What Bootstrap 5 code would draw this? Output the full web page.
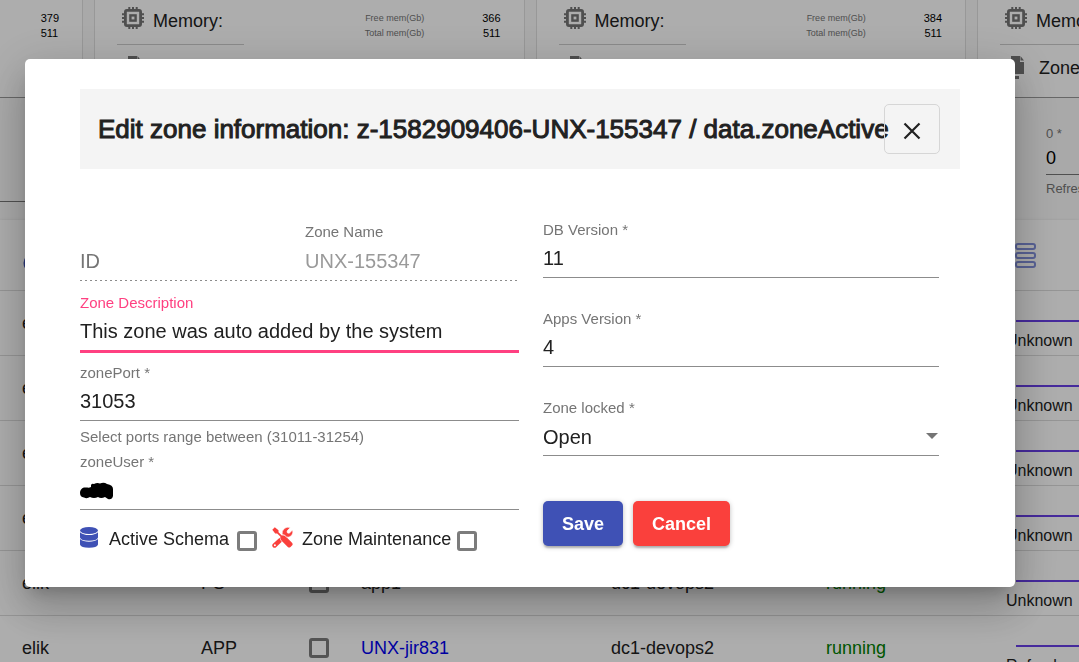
<!DOCTYPE html>
<html lang="en">
<head>
<meta charset="utf-8">
<meta name="viewport" content="width=device-width, initial-scale=1">
<title>Edit zone information</title>
<link rel="stylesheet" href="https://cdn.jsdelivr.net/npm/bootstrap@5.3.0/dist/css/bootstrap.min.css">
<style>
  body { font-family: "Liberation Sans", Arial, sans-serif; font-size: 18px; line-height: 24px; color: #212121; background: #fafafa; }

  /* Server cards */
  .servers { display: grid; grid-template-columns: 83px minmax(0, 1fr) minmax(0, 1fr) 102px; gap: 11px; height: 98px; border-bottom: 1px solid #999; }
  .server { background: #fff; border: solid #e0e0e0; border-width: 0 1px; white-space: nowrap; overflow: hidden; padding-left: 22px; }
  .server:first-child { border-left: 0; padding-left: 0; }
  .server:last-child { border-right: 0; }
  .server-row { height: 45px; padding-top: 6px; }
  .server-name { width: 127px; padding: 0 4px; border-bottom: 1px solid #ccc; gap: 8px; }
  .server-name span { padding-top: 3px; }
  .server-zones { padding: 11px 8px; gap: 13px; }
  .mem-info { font-size: 9px; line-height: 15px; color: #757575; padding: 5px 23px 0 0; gap: 58px; }
  .mem-info b { font-size: 11px; font-weight: 400; color: #000; }

  /* Filter bar */
  .filters { height: 122px; }
  .filters .filter-box { width: 300px; height: 104px; border: 0; border-bottom: 1px solid #777; background: transparent; }
  .refresh-box { width: 33px; padding-top: 28px; white-space: nowrap; overflow: hidden; font-size: 13px; line-height: 16px; color: #757575; }
  .refresh-box input { border: 0; border-bottom: 1px solid #777; background: transparent; width: 100%; height: 33px; padding: 0; font-size: 18px; display: block; margin-bottom: 6px; }

  /* Zone table */
  .zones { table-layout: fixed; width: 100%; background: #fff; box-shadow: 0 2px 4px rgba(0,0,0,.3); }
  .zones th { height: 70px; padding: 0; border-bottom: 1px solid #dcdcdc; }
  .zones td { height: 65px; padding: 0; border-bottom: 1px solid #dcdcdc; white-space: nowrap; }
  .zones th:first-child, .zones td:first-child { padding-left: 22px; }
  .zones a { color: #0000ee; text-decoration: none; }
  .zones .running { color: #008000; }
  .zones td:last-child { vertical-align: top; padding-top: 29px; font-size: 16px; line-height: 20px; overflow: hidden; }
  .refresh-bar { height: 2px; background: #673ee6; margin: 0 0 9px 10px; }
  .tick { appearance: none; display: block; flex: none; width: 20px; height: 20px; margin: 0; border: 3px solid #7c7c7c; border-radius: 3px; background: transparent; }

  /* Dialog */
  .modal-backdrop { --bs-backdrop-opacity: .32; }
  .zone-dialog { max-width: none; margin: 59px 64px 0 25px; }
  .zone-dialog .modal-content { border: 0; border-radius: 5px; padding: 30px 55px 36px; color: #212121; box-shadow: 0 11px 15px -7px rgba(0,0,0,.2), 0 24px 38px 3px rgba(0,0,0,.14), 0 9px 46px 8px rgba(0,0,0,.12); }
  .zone-dialog .modal-header { height: 80px; padding: 0 20px 0 18px; background: #f4f4f4; border: 0; border-radius: 0; }
  .zone-dialog .modal-title { min-width: 0; font-size: 26px; line-height: 32px; font-weight: 400; -webkit-text-stroke: 1px #212121; white-space: nowrap; }
  .close-btn { flex: none; width: 56px; height: 50px; padding: 4px 0 0; border: 1px solid #d6d6d6; border-radius: 5px; background: transparent; color: #212121; }
  .zone-form { display: grid; grid-template-columns: 439fr 396fr; column-gap: 24px; padding: 51px 21px 0 0; }
  .field { margin-bottom: 10px; position: relative; }
  .field label, .hint { display: block; font-size: 15px; line-height: 20px; height: 20px; color: #757575; }
  .field input, .field select { display: block; width: 100%; height: 38px; padding: 0; border: 0; border-bottom: 1px solid #8c8c8c; border-radius: 0; background: transparent; color: #212121; font-size: 20px; line-height: 24px; outline: 0; appearance: none; }
  .field input::placeholder { color: #757575; opacity: 1; }
  .field input:disabled { color: #9a9a9a; border-bottom: 0; }
  .field.active label { color: #ff4081; }
  .field.active input { height: 40px; border-bottom: 3px solid #ff4081; }
  .fixed-fields { gap: 11px; margin-bottom: 12px; padding-bottom: 1px; background: repeating-linear-gradient(90deg, #8c8c8c 0 2px, transparent 2px 5px) bottom / 100% 1px no-repeat; }
  .fixed-fields .field { margin: 0; }
  .field .arrow { position: absolute; right: 1px; bottom: 17px; pointer-events: none; }
  .field .redaction { position: absolute; left: 0; bottom: 8px; }
  .hint { margin: -4px 0 5px; }
  .left-col { padding-top: 2px; }
  .right-col .field { margin-bottom: 31px; }
  .actions { padding-top: 14px; gap: 10px; }
  .options { padding-top: 7px; }
  .options label { margin: 0 8px 0 11px; }
  .options .tick { margin: 4px 15px 0 0; }
  .options label.maint { margin: 0 6px 0 9px; }
  .action { height: 45px; padding: 0 19px; border: 0; border-radius: 5px; color: #fff; font-weight: 700; font-size: 18px; box-shadow: 0 3px 2px -1px rgba(0,0,0,.2), 0 1px 5px rgba(0,0,0,.25); }
  .save { background: #3f51b5; }
  .cancel { background: #fa403c; }
</style>
</head>
<body class="overflow-hidden">

<svg class="d-none">
  <symbol id="chip" viewBox="0 0 24 24">
    <g fill="none" stroke="#757575" stroke-width="2.800"><rect x="4.400" y="4.400" width="15.200" height="15.200" rx="1.500"/><rect x="9.400" y="9.400" width="5.200" height="5.200" stroke-width="2.400"/>
    <path d="M8.300 1v3M12 1v3M15.700 1v3M8.300 20v3M12 20v3M15.700 20v3M1 8.300h3M1 12h3M1 15.700h3M20 8.300h3M20 12h3M20 15.700h3" stroke-width="2"/></g>
  </symbol>
  <symbol id="files" viewBox="0 0 18 23">
    <path fill="#757575" d="M3 0h9v6h4v12H3zM12.500 0L16 4.500h-3.500zM0 4h3.500v16H11v3H0z"/>
  </symbol>
  <symbol id="stack" viewBox="0 0 30 26">
    <g fill="none" stroke="#8290dc" stroke-width="2"><rect x="10" y="2" width="19" height="5" rx="2"/><rect x="10" y="11" width="19" height="5" rx="2"/><rect x="10" y="20" width="19" height="5" rx="2"/></g>
  </symbol>
</svg>

<div class="vh-100 overflow-hidden">
  <section class="servers">
    <div class="server"><div class="server-row d-flex justify-content-end">
      <div class="mem-info d-flex"><b>379<br>511</b></div></div></div>
    <div class="server">
      <div class="server-row d-flex justify-content-between">
        <div class="server-name d-flex"><svg width="24" height="24"><use href="#chip"/></svg><span>Memory:</span></div>
        <div class="mem-info d-flex text-end"><span>Free mem(Gb)<br>Total mem(Gb)</span><b>366<br>511</b></div>
      </div>
      <div class="server-zones d-flex"><svg width="18" height="23"><use href="#files"/></svg>Zones:</div>
    </div>
    <div class="server">
      <div class="server-row d-flex justify-content-between">
        <div class="server-name d-flex"><svg width="24" height="24"><use href="#chip"/></svg><span>Memory:</span></div>
        <div class="mem-info d-flex text-end"><span>Free mem(Gb)<br>Total mem(Gb)</span><b>384<br>511</b></div>
      </div>
      <div class="server-zones d-flex"><svg width="18" height="23"><use href="#files"/></svg>Zones:</div>
    </div>
    <div class="server">
      <div class="server-row d-flex">
        <div class="server-name d-flex flex-shrink-0"><svg width="24" height="24"><use href="#chip"/></svg><span>Memory:</span></div>
      </div>
      <div class="server-zones d-flex"><svg class="flex-shrink-0" width="18" height="23"><use href="#files"/></svg>Zones:</div>
    </div>
  </section>

  <section class="filters d-flex justify-content-between">
    <input class="filter-box" type="text" aria-label="Filter">
    <div class="refresh-box"><label for="refresh" class="d-block">0 *</label><input id="refresh" value="0"><span>Refresh rate</span></div>
  </section>

  <table class="zones">
    <colgroup><col style="width:201px"><col style="width:108px"><col style="width:52px"><col style="width:250px"><col style="width:215px"><col style="width:180px"><col style="width:73px"></colgroup>
    <thead><tr><th><svg width="30" height="26" viewBox="0 0 30 26"><circle cx="11" cy="21" r="8" fill="none" stroke="#3f51b5" stroke-width="3"/></svg></th><th></th><th></th><th></th><th></th><th></th><th><svg width="30" height="26"><use href="#stack"/></svg></th></tr></thead>
    <tbody>
      <tr><td>elik</td><td></td><td></td><td></td><td></td><td></td><td><div class="refresh-bar"></div>Unknown</td></tr>
      <tr><td>elik</td><td></td><td></td><td></td><td></td><td></td><td><div class="refresh-bar"></div>Unknown</td></tr>
      <tr><td>elik</td><td></td><td></td><td></td><td></td><td></td><td><div class="refresh-bar"></div>Unknown</td></tr>
      <tr><td>elik</td><td></td><td></td><td></td><td></td><td></td><td><div class="refresh-bar"></div>Unknown</td></tr>
      <tr><td>elik</td><td>PS</td><td><input class="tick" type="checkbox" aria-label="Select app1"></td><td>app1</td><td>dc1-devops2</td><td class="running">running</td><td><div class="refresh-bar"></div>Unknown</td></tr>
      <tr><td>elik</td><td>APP</td><td><input class="tick" type="checkbox" aria-label="Select UNX-jir831"></td><td><a href="#">UNX-jir831</a></td><td>dc1-devops2</td><td class="running">running</td><td><div class="refresh-bar"></div>Refreshes</td></tr>
    </tbody>
  </table>
</div>

<div class="modal-backdrop show"></div>
<div class="modal d-block overflow-hidden" role="dialog" aria-modal="true" aria-labelledby="dialog-title">
  <div class="modal-dialog zone-dialog">
    <div class="modal-content">
      <div class="modal-header">
        <h1 class="modal-title" id="dialog-title">Edit zone information: z-1582909406-UNX-155347 / data.zoneActive</h1>
        <button type="button" class="close-btn d-flex align-items-center justify-content-center" aria-label="Close"><svg width="18" height="18" viewBox="0 0 18 18"><path d="M1.500 1.500l15 15M16.500 1.500l-15 15" stroke="currentColor" stroke-width="2.200"/></svg></button>
      </div>
      <form class="zone-form">
        <div class="left-col">
          <div class="fixed-fields d-flex">
            <div class="field w-50"><label for="zid"></label><input id="zid" placeholder="ID" aria-label="ID" disabled></div>
            <div class="field w-50"><label for="zname">Zone Name</label><input id="zname" value="UNX-155347" disabled></div>
          </div>
          <div class="field active"><label for="zdesc">Zone Description</label><input id="zdesc" value="This zone was auto added by the system"></div>
          <div class="field"><label for="zport">zonePort *</label><input id="zport" value="31053"></div>
          <div class="hint">Select ports range between (31011-31254)</div>
          <div class="field"><label for="zuser">zoneUser *</label><input id="zuser">
            <svg class="redaction" width="34" height="20" viewBox="0 0 34 20"><path d="M0 11C0 7 3 5 6 5.500C8 5.500 9 6 11 5L11 3Q12 1 14 2Q17 .5 20 1.500Q24 0 27 2Q33 3 33 7V14Q32 18 28 17L25 15Q21 17 18 15Q14 17 10 15Q7 17 4 15.500Q0 15 0 11z"/></svg></div>
          <div class="options d-flex">
            <svg width="18" height="21" viewBox="0 0 18 21" fill="#3f51b5"><ellipse cx="9" cy="3.500" rx="9" ry="3.500"/><path d="M0 5.200Q3 8 9 8T18 5.200V10.500Q17 13.700 9 13.700T0 10.500zM0 12Q3 14.800 9 14.800T18 12V17.500Q17 20.800 9 20.800T0 17.500z"/></svg>
            <label for="active">Active Schema</label><input class="tick" type="checkbox" id="active">
            <svg width="21" height="21" viewBox="0 0 21 21"><path fill="#fa403c" d="M2.800 .3L6.500 3.200V5.200L9.800 8.500Q12 7.800 13.800 9.600L20 15.800Q21.300 17.200 20 18.500L18.500 20Q17.200 21.200 15.800 20L9.600 13.800Q7.800 12 8.500 9.800L5.200 6.500H3.200L.3 2.800z"/><path fill="#fa403c" stroke="#fff" stroke-width=".6" d="M10.200 7.600Q9.600 3.800 12.400 1.500Q15-.6 18.300 .6L15 4L15.400 5.900L17.300 6.300L20.500 3Q21.600 6.200 19.500 8.500Q17 11 14.600 10Q12.500 7.500 10.200 7.600z"/><path fill="#fa403c" d="M7.600 10.800L1 16.800Q-.6 18.500 1 20.200Q2.800 21.600 4.300 20L9.800 14.700Q7.800 13 7.600 10.800z"/><circle cx="2.900" cy="18.200" r="1" fill="#fff"/></svg>
            <label for="maint" class="maint">Zone Maintenance</label><input class="tick" type="checkbox" id="maint">
          </div>
        </div>
        <div class="right-col">
          <div class="field"><label for="dbv">DB Version *</label><input id="dbv" value="11"></div>
          <div class="field"><label for="appv">Apps Version *</label><input id="appv" value="4"></div>
          <div class="field"><label for="locked">Zone locked *</label><select id="locked"><option>Open</option><option>Locked</option></select>
            <svg class="arrow" width="12" height="6" viewBox="0 0 12 6"><path d="M0 0h12L6 6z" fill="#757575"/></svg></div>
          <div class="actions d-flex">
            <button type="button" class="action save">Save</button>
            <button type="button" class="action cancel">Cancel</button>
          </div>
        </div>
      </form>
    </div>
  </div>
</div>

<script src="https://cdn.jsdelivr.net/npm/bootstrap@5.3.0/dist/js/bootstrap.bundle.min.js"></script>
</body>
</html>
